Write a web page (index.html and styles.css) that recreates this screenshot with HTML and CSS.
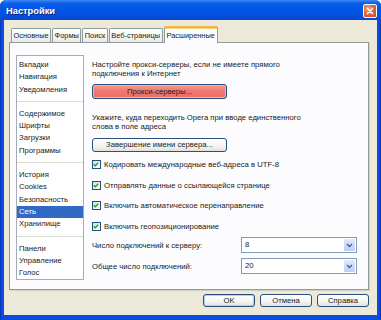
FILE: index.html
```html
<!DOCTYPE html>
<html lang="ru">
<head>
<meta charset="utf-8">
<title>Настройки</title>
<link rel="stylesheet" href="styles.css">
</head>
<body>
<div class="window">
  <div class="titlebar">
    <span class="title">Настройки</span>
    <span class="close"><svg width="14" height="14" viewBox="0 0 14 14"><path d="M4 4 L10 10 M10 4 L4 10" stroke="#fff" stroke-width="1.8" stroke-linecap="round"/></svg></span>
  </div>
  <div class="client">
    <div class="tabs">
      <span class="tab">Основные</span>
      <span class="tab">Формы</span>
      <span class="tab">Поиск</span>
      <span class="tab">Веб-страницы</span>
      <span class="tab active">Расширенные</span>
    </div>
    <div class="panel">
      <ul class="nav">
        <li>Вкладки</li>
        <li>Навигация</li>
        <li>Уведомления</li>
        <li class="sep"></li>
        <li>Содержимое</li>
        <li>Шрифты</li>
        <li>Загрузки</li>
        <li>Программы</li>
        <li class="sep"></li>
        <li>История</li>
        <li>Cookies</li>
        <li>Безопасность</li>
        <li class="selected">Сеть</li>
        <li>Хранилище</li>
        <li class="sep"></li>
        <li>Панели</li>
        <li>Управление</li>
        <li>Голос</li>
      </ul>
      <div class="content">
        <p class="text first">Настройте прокси-серверы, если не имеете прямого<br>подключения к Интернет</p>
        <button class="btn wide proxy">Прокси-серверы...</button>
        <p class="text second">Укажите, куда переходить Opera при вводе единственного<br>слова в поле адреса</p>
        <button class="btn wide server">Завершение имени сервера...</button>
        <div class="checks">
          <label class="check"><span class="box"><svg width="9" height="9" viewBox="0 0 9 9"><path d="M2 4.3 L3.7 6 L7 2.6" fill="none" stroke="#21a121" stroke-width="1.5"/></svg></span>Кодировать международные веб-адреса в UTF-8</label>
          <label class="check"><span class="box"><svg width="9" height="9" viewBox="0 0 9 9"><path d="M2 4.3 L3.7 6 L7 2.6" fill="none" stroke="#21a121" stroke-width="1.5"/></svg></span>Отправлять данные о ссылающейся странице</label>
          <label class="check"><span class="box"><svg width="9" height="9" viewBox="0 0 9 9"><path d="M2 4.3 L3.7 6 L7 2.6" fill="none" stroke="#21a121" stroke-width="1.5"/></svg></span>Включить автоматическое перенаправление</label>
          <label class="check"><span class="box"><svg width="9" height="9" viewBox="0 0 9 9"><path d="M2 4.3 L3.7 6 L7 2.6" fill="none" stroke="#21a121" stroke-width="1.5"/></svg></span>Включить геопозиционирование</label>
        </div>
        <div class="fields">
          <span class="label">Число подключений к серверу:</span>
          <span class="select"><span class="value">8</span><span class="arrow"><svg width="7" height="5" viewBox="0 0 7 5"><path d="M1 1 L3.5 3.5 L6 1" fill="none" stroke="#4d6185" stroke-width="1.4"/></svg></span></span>
          <span class="label">Общее число подключений:</span>
          <span class="select"><span class="value">20</span><span class="arrow"><svg width="7" height="5" viewBox="0 0 7 5"><path d="M1 1 L3.5 3.5 L6 1" fill="none" stroke="#4d6185" stroke-width="1.4"/></svg></span></span>
        </div>
      </div>
    </div>
    <div class="actions">
      <button class="btn action default">OK</button>
      <button class="btn action">Отмена</button>
      <button class="btn action">Справка</button>
    </div>
  </div>
</div>
</body>
</html>
```
FILE: styles.css
```css
* { box-sizing: border-box; }
html, body { margin: 0; padding: 0; }
body {
  width: 381px;
  height: 320px;
  overflow: hidden;
  font-family: "Liberation Sans", Arial, sans-serif;
  font-size: 7.7px;
  color: #222;
}
.window {
  width: 381px;
  height: 320px;
  display: flex;
  flex-direction: column;
  background: linear-gradient(90deg, #0831b8 0, #0a4de0 2px, #0a4de0 calc(100% - 2px), #0831b8 100%);
  border-radius: 6px 6px 0 0;
}
.titlebar {
  height: 20px;
  flex: none;
  display: flex;
  align-items: center;
  justify-content: space-between;
  padding: 0 4px 0 6px;
  background: linear-gradient(#3f8cf6 0, #0e5fe8 3px, #0157e6 40%, #0250df 75%, #0a46cc 100%);
  border-radius: 6px 6px 0 0;
}
.title {
  color: #fff;
  font-weight: bold;
  font-size: 9.3px;
  text-shadow: 1px 1px 0 #0a2a80;
  margin-top: 2px;
}
.close {
  width: 14px;
  height: 14px;
  display: flex;
  align-items: center;
  justify-content: center;
  border: 1px solid #fff;
  border-radius: 2px;
  background: radial-gradient(circle at 35% 30%, #f2a080 0, #e0683f 45%, #c8442a 100%);
  margin-top: 1px;
}
.client {
  flex: 1;
  display: flex;
  flex-direction: column;
  margin: 0 4px 5px 4px;
  padding: 6px 8px 8px 5px;
  background: #ece9d8;
}
.tabs {
  height: 16px;
  display: flex;
  align-items: flex-end;
  padding-left: 2px;
  position: relative;
  z-index: 1;
}
.tab {
  height: 14px;
  line-height: 13px;
  padding: 0 1.5px;
  margin-right: 1px;
  font-size: 7.4px;
  border: 1px solid #919b9c;
  border-bottom: none;
  border-radius: 2px 2px 0 0;
  background: linear-gradient(#ffffff, #f3f3ef 70%, #e9e8e0);
  white-space: nowrap;
}
.tab.active {
  height: 17px;
  line-height: 15px;
  margin-bottom: -1px;
  padding: 0 2px;
  background: #fcfcfe;
  border-top: 2px solid #f5b14a;
  box-shadow: inset 0 1px 0 #ffd37a;
}
.panel {
  flex: 1;
  display: flex;
  gap: 8px;
  padding: 12px 0 0 6px;
  background: #fcfcfe;
  border: 1px solid #919b9c;
  box-shadow: 1px 1px 0 #d0cfc5;
}
.nav {
  list-style: none;
  margin: 0;
  padding: 3px 0 0 0;
  width: 68px;
  height: 225px;
  flex: none;
  background: #fff;
  border: 1px solid #a5acb5;
}
.nav li {
  height: 12.3px;
  line-height: 12.3px;
  padding-left: 2px;
  white-space: nowrap;
}
.nav li.sep {
  height: 12px;
  position: relative;
}
.nav li.sep::after {
  content: "";
  position: absolute;
  left: 0;
  right: 0;
  top: 5px;
  border-top: 1px solid #dcdbd2;
}
.nav li.selected {
  background: #316ac5;
  color: #fff;
}
.content {
  flex: 1;
  display: flex;
  flex-direction: column;
  align-items: flex-start;
  padding-top: 5px;
}
.text {
  margin: 0;
  line-height: 9px;
}
.text.second { margin-top: 14px; }
.btn {
  font-family: inherit;
  font-size: 7.7px;
  color: #222;
  border: 1px solid #2b4f7e;
  border-radius: 3px;
  background: linear-gradient(#ffffff, #f4f4f0 60%, #e2e0d6);
  padding: 0;
  margin: 0;
}
.btn.wide { width: 135px; }
.btn.proxy {
  height: 15px;
  margin-top: 5.5px;
  background: linear-gradient(#f59a90, #f07c74 40%, #ea6a64);
  box-shadow: inset 0 0 0 1px #f7b0a0;
}
.btn.server {
  height: 14px;
  margin-top: 7px;
}
.checks {
  display: flex;
  flex-direction: column;
  gap: 8.5px;
  margin-top: 7px;
}
.check {
  display: flex;
  align-items: center;
  height: 12px;
  gap: 3px;
  white-space: nowrap;
}
.box {
  width: 9px;
  height: 9px;
  display: flex;
  border: 1px solid #1c5180;
  background: linear-gradient(135deg, #dcdcd6, #ffffff);
}
.box svg { margin: -1px 0 0 -1px; }
.fields {
  display: grid;
  grid-template-columns: 149px 116px;
  row-gap: 5px;
  align-items: center;
  margin-top: 5px;
}
.select {
  height: 16px;
  display: flex;
  align-items: stretch;
  justify-content: space-between;
  border: 1px solid #7f9db9;
  background: #fff;
}
.value {
  line-height: 14px;
  padding-left: 3px;
}
.arrow {
  width: 11px;
  margin: 1px;
  display: flex;
  align-items: center;
  justify-content: center;
  border-radius: 1px;
  background: linear-gradient(#dfe8fd, #bccdf6);
}
.actions {
  display: flex;
  justify-content: flex-end;
  gap: 5px;
  margin-top: 4px;
  height: 13px;
}
.btn.action {
  width: 52px;
  height: 13px;
}
.btn.default {
  box-shadow: inset 0 0 0 1px #b6cdf3;
}
```
